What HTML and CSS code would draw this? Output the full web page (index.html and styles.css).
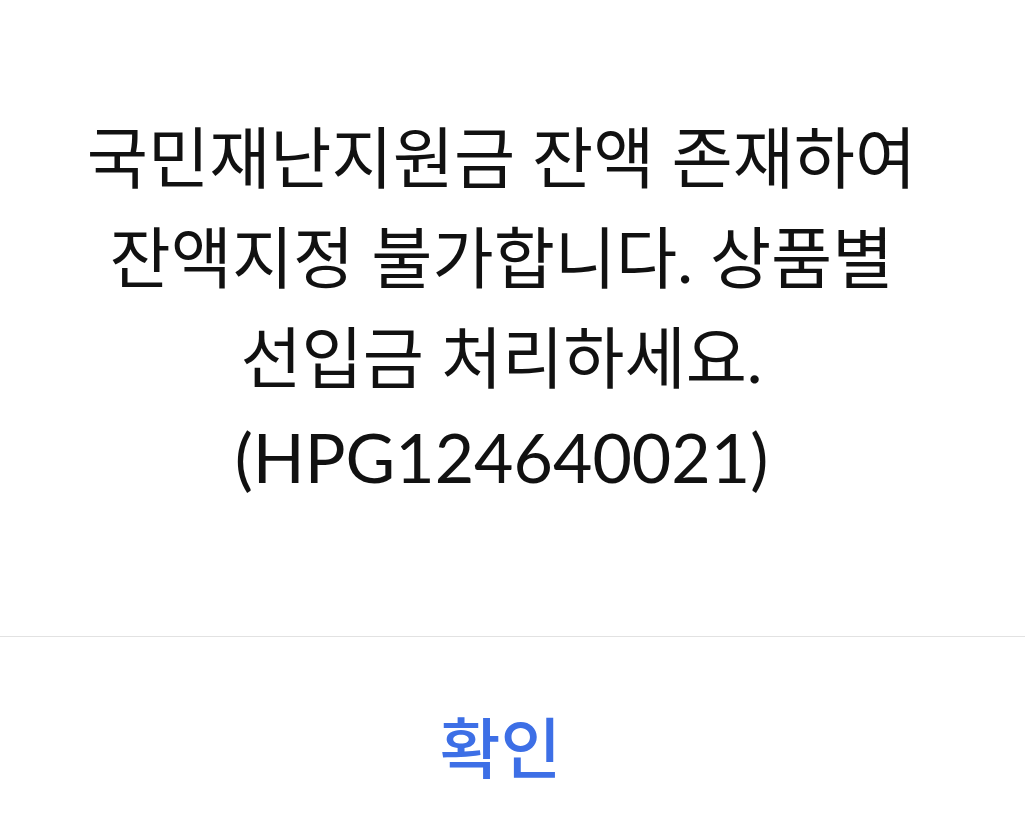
FILE: index.html
```html
<!DOCTYPE html>
<html lang="ko">
<head>
<meta charset="utf-8">
<link rel="stylesheet" href="styles.css">
</head>
<body>
<div class="dialog">
  <div class="message">
    <p class="text">국민재난지원금 잔액 존재하여<br>잔액지정 불가합니다. 상품별<br>선입금 처리하세요.<br><span class="code">(HPG124640021)</span></p>
  </div>
  <div class="actions">
    <button class="confirm">확인</button>
  </div>
</div>
</body>
</html>
```
FILE: styles.css
```css
html, body {
  margin: 0;
  padding: 0;
  background: #ffffff;
}
.dialog {
  width: 1025px;
  height: 830px;
  display: flex;
  flex-direction: column;
  font-family: Lato, "Noto Sans CJK KR", sans-serif;
}
.message {
  height: 637px;
  box-sizing: border-box;
  border-bottom: 1px solid #e2e2e2;
  padding-top: 107px;
  padding-right: 22px;
  display: flex;
  justify-content: center;
}
.text {
  margin: 0;
  font-size: 66.5px;
  line-height: 100px;
  color: #111111;
  text-align: center;
}
.code {
  font-size: 68px;
}
.actions {
  flex: 1;
  display: flex;
  justify-content: center;
  align-items: center;
  padding-right: 24px;
}
.confirm {
  background: none;
  border: none;
  font-family: inherit;
  font-size: 66px;
  font-weight: 500;
  color: #3d6fe6;
  padding: 0;
  margin-top: 20px;
}
```
